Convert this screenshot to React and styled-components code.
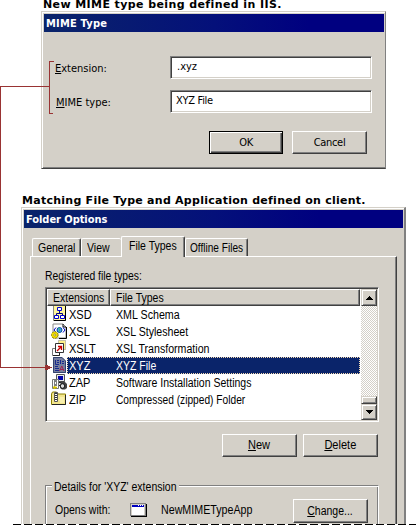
import React from "react";
import styled, { createGlobalStyle, css } from "styled-components";

const FACE = "#d4d0c8";
const SHADOW = "#808080";
const DARK = "#404040";
const NAVY = "#0a246a";
const RED = "#993333";

const Global = createGlobalStyle`
  * { box-sizing: border-box; }
  body { margin: 0; background: #fff; overflow: hidden; }
  u { text-decoration-thickness: 1px; text-underline-offset: 1px; text-decoration-skip-ink: none; }
`;

const tahoma = css`font-family: "DejaVu Sans Condensed", "DejaVu Sans", sans-serif; font-stretch: condensed;`;

const Page = styled.main`
  position: relative;
  width: 416px;
  height: 525px;
  overflow: hidden;
  background: #fff;
  color: #000;
`;

const Text = styled.span`
  display: block;
  white-space: pre;
  height: 13px;
  font-size: 11px;
  line-height: 13px;
  letter-spacing: ${(p) => p.$ls || 0}px;
`;

/* Narrow, tall bitmap-style lettering of the older system font. */
const SysText = styled(Text)`
  font-family: "Liberation Sans", Arial, sans-serif;
  font-size: 12px;
  line-height: 15px;
  transform: scaleX(${(p) => p.$sx || 0.875});
  transform-origin: ${(p) => (p.$center ? "center" : "left")};
`;

const Caption = styled.h2`
  margin: 0 0 0 ${(p) => p.$left}px;
  height: ${(p) => p.$height}px;
  padding-top: ${(p) => p.$top || 0}px;
  font: bold 11px/${(p) => p.$line || 13}px "DejaVu Sans", Verdana, sans-serif;
  letter-spacing: ${(p) => p.$ls}px;
  white-space: nowrap;
`;

const MimeWindow = styled.section`
  ${tahoma}
  width: 345px;
  height: 158px;
  margin-left: 41px;
  padding: 1px 0 0 1px;
  background: ${FACE};
  border: 1px solid;
  border-color: ${FACE} ${SHADOW} ${DARK} ${FACE};
  box-shadow: inset 1px 1px 0 #fff, inset 0 -1px 0 ${SHADOW};
`;

const FolderWindow = styled.section`
  width: 385px;
  height: 317px;
  margin-left: 21px;
  padding: 1px 0 0 1px;
  overflow: hidden;
  background: ${FACE};
  border: solid;
  border-width: 1px 2px 0 1px;
  border-color: ${FACE} ${SHADOW} ${FACE} ${FACE};
  box-shadow: inset 1px 1px 0 #fff;
`;

const TitleBar = styled.header`
  ${tahoma}
  width: ${(p) => p.$width}px;
  height: 18px;
  margin: 1px 0 0 1px;
  padding: 3px 0 0 2px;
  color: #fff;
  font-weight: bold;
  background: linear-gradient(90deg, #0a246a 0%, #04107a 50%, #000080 78%);
`;

const Form = styled.div`
  display: grid;
  grid-template-columns: 115px 202px;
  row-gap: 11px;
  padding: 24px 0 0 12px;
`;

const FieldLabel = styled.label`
  padding: 6px 0 0 ${(p) => p.$left || 0}px;
`;

const Field = styled.div`
  height: 23px;
  padding: 3px 0 0 ${(p) => p.$pad}px;
  background: #fff;
  border: 1px solid;
  border-color: ${SHADOW} #fff #fff ${SHADOW};
  box-shadow: inset 1px 1px 0 ${DARK}, inset -1px -1px 0 ${FACE};
`;

const ButtonRow = styled.div`
  display: flex;
  gap: ${(p) => p.$gap}px;
  margin: ${(p) => p.$top}px 0 0 ${(p) => p.$left}px;
`;

const Button = styled.button`
  display: flex;
  justify-content: center;
  align-items: flex-start;
  width: ${(p) => p.$width || 75}px;
  height: ${(p) => p.$height || 23}px;
  margin: 0;
  padding: ${(p) => p.$top ?? 4}px 0 0;
  font: inherit;
  color: #000;
  background: ${FACE};
  border: 1px solid;
  border-color: #fff ${DARK} ${DARK} #fff;
  box-shadow: inset -1px -1px 0 ${SHADOW};
  ${(p) => p.$default && css`
    border-color: #000;
    box-shadow: inset 1px 1px 0 #fff, inset -1px -1px 0 ${DARK}, inset -2px -2px 0 ${SHADOW};
  `}
`;

const Tabs = styled.nav`
  display: flex;
  align-items: flex-end;
  height: 28px;
  margin-left: 9px;
`;

const Tab = styled.div`
  position: relative;
  z-index: ${(p) => (p.$active ? 1 : 0)};
  width: ${(p) => p.$width}px;
  height: ${(p) => (p.$active ? 21 : 18)}px;
  margin-bottom: ${(p) => (p.$active ? -1 : 0)}px;
  padding: 2px 0 0 ${(p) => p.$pad}px;
  background: ${FACE};
  border: solid;
  border-width: 1px ${(p) => (p.$flat ? 0 : 1)}px 0 1px;
  border-color: #fff ${DARK} ${FACE} #fff;
  border-radius: 2px 2px 0 0;
  box-shadow: ${(p) => (p.$flat ? "none" : `inset -1px 0 0 ${SHADOW}`)};
`;

const TabPage = styled.div`
  width: 367px;
  height: 280px;
  margin-left: 7px;
  padding: 12px 0 0 14px;
  border: solid;
  border-width: 1px 1px 0 1px;
  border-color: #fff ${DARK} #fff #fff;
  box-shadow: inset -1px 0 0 ${SHADOW};
`;

const ListBox = styled.div`
  display: flex;
  width: 334px;
  height: 135px;
  margin-top: 5px;
  padding: 1px;
  background: #fff;
  border: 1px solid;
  border-color: ${SHADOW} #fff #fff ${SHADOW};
  box-shadow: inset 1px 1px 0 ${DARK}, inset -1px -1px 0 ${FACE};
`;

const ListBody = styled.div`
  width: 314px;
`;

const HeadRow = styled.div`
  display: flex;
  height: 17px;
`;

const HeadCell = styled.div`
  width: ${(p) => p.$width}px;
  padding: 1px 0 0 ${(p) => p.$pad}px;
  background: ${FACE};
  border: 1px solid;
  border-color: #fff ${DARK} ${DARK} #fff;
  box-shadow: inset -1px -1px 0 ${SHADOW};
`;

const Row = styled.div`
  display: flex;
  height: 17px;
  padding-left: 4px;
`;

const RowIcon = styled.svg`
  display: block;
  flex: none;
  width: 16px;
  height: 17px;
`;

const RowText = styled.div`
  display: grid;
  grid-template-columns: 47px 1fr;
  flex: 1;
  margin-right: 1px;
  padding: 1px 0 0 1px;
  border: 1px dotted transparent;
  ${(p) => p.$selected && css`
    color: #fff;
    background: ${NAVY};
    border-color: #f5dbb0;
  `}
`;

const ScrollBar = styled.div`
  display: flex;
  flex-direction: column;
  width: 16px;
  height: 131px;
  background: repeating-conic-gradient(#fff 0 25%, ${FACE} 0 50%) 0 0 / 2px 2px;
`;

const ScrollPart = styled.div`
  display: flex;
  align-items: center;
  justify-content: center;
  height: ${(p) => p.$height}px;
  margin-top: ${(p) => p.$top || 0}px;
  background: ${FACE};
  border: 1px solid;
  border-color: ${FACE} ${DARK} ${DARK} ${FACE};
  box-shadow: inset 1px 1px 0 #fff, inset -1px -1px 0 ${SHADOW};
`;

const Details = styled.fieldset`
  width: 334px;
  height: 60px;
  min-width: 0;
  margin: 21px 0 0;
  padding: 0;
  border: 1px solid ${SHADOW};
  border-right-color: #fff;
  box-shadow: inset 1px 1px 0 #fff, inset -1px 0 0 ${SHADOW};
`;

const Legend = styled.legend`
  height: 15px;
  width: 127px;
  margin-left: 6px;
  padding: 2px 0 0 2px;
  background: ${FACE};
`;

const DetailRow = styled.div`
  display: grid;
  grid-template-columns: 75px 31px 132px 75px;
  padding: 6px 0 0 9px;
`;

const DetailCell = styled.div`
  padding-top: 4px;
`;

const CutLine = styled.div`
  height: 1px;
  margin-left: 13px;
  background: repeating-linear-gradient(90deg, #000 0 8px, #fff 8px 11px);
`;

const Overlay = styled.svg`
  position: absolute;
  left: 0;
  top: 0;
  z-index: 3;
  pointer-events: none;
`;

const glyphs = {
  XSD: (
    <>
      <rect x="2" y="0" width="13" height="15" fill="#fff59a" />
      <path d="M2.5 0v14.5h12V0" fill="none" stroke="#888" />
      <path d="M14.5 0v14.5H3" fill="none" stroke="#000" />
      <path d="M8.5 5v2M5.5 9V7.500h6V9" fill="none" stroke="#000080" />
      <path d="M6.500 1.500h4v3h-4zM3.500 9.500h4v3h-4zM9.500 9.500h4v3h-4z" fill="#fff" stroke="#0000d0" />
    </>
  ),
  XSL: (
    <>
      <path d="M2 1h10l3 3v11H2z" fill="#fff" stroke="#888" />
      <path d="M12 1v3h3M15.500 4v11.500H8" fill="none" stroke="#000" />
      <path d="M5 4.500L3 7l2 2.500M12 4.500l2 2.500-2 2.500" fill="none" stroke="#0000c0" />
      <circle cx="8.500" cy="7" r="2.500" fill="#4aa3e8" stroke="#064b9b" />
      <path d="M7 5l2 1-1 3" stroke="#39b878" fill="none" />
      <circle cx="3.800" cy="12" r="3.300" fill="#f4df00" stroke="#8a7c00" strokeDasharray="2 1" />
      <circle cx="3.800" cy="12" r="1" fill="#fff" stroke="#796c00" strokeWidth=".6" />
    </>
  ),
  XSLT: (
    <>
      <path d="M7.500 .5h7v9h-7z" fill="#fff28a" stroke="#888" strokeDasharray="1 1" />
      <path d="M1.500 8.500h7v7h-7z" fill="#fff" stroke="#777" />
      <path d="M8.500 9v6.500H2" fill="none" stroke="#222" />
      <path d="M4.500 3.500h8v9h-8z" fill="#fff" stroke="#333" />
      <path d="M6 11l4-4M7 6.500h3.500V10" fill="none" stroke="#c00" strokeWidth="1.300" />
    </>
  ),
  XYZ: (
    <>
      <path d="M2 0h9l4 4v12H2z" fill="#777f9e" />
      <path d="M2.500 .5h8.500l3.500 3.500v11.500h-12z" fill="none" stroke="#34436f" />
      <path d="M4.500 3v4.500H8M6 3.500h2M6 5.500h2M9.500 3v4M11 4.500h2M11 6.500h2M4 9.500h3M4 11.500h4M4 13.500h4" fill="none" stroke="#172a8e" />
      <path d="M8.500 14l2.300-5 2.200 5M9 12.500h3.500" fill="none" stroke="#a02450" />
    </>
  ),
  ZAP: (
    <>
      <path d="M5.500 .5h8v7h-8z" fill="#e8e8e8" stroke="#555" />
      <path d="M7 2h5v4H7z" fill="#0000a8" />
      <path d="M4 8.500h9.500v3H4z" fill="#ddd" stroke="#222" />
      <path d="M1.500 5.500h6v9h-6z" fill="#fff" stroke="#777" />
      <path d="M3 7h3M3 9h1M5 9h1M3 11h3" fill="none" stroke="#000" />
      <path d="M3.500 12v3M2 13.500h4" stroke="#d4c000" strokeWidth="1.500" />
      <path d="M10 7h3l3 3v4l-2 1.500h-3L9 14z" fill="#444" />
      <circle cx="11.500" cy="12" r="2.300" fill="#ddd" stroke="#111" />
    </>
  ),
  ZIP: (
    <>
      <path d="M.5 13.500V3l1-2h4l1.500 2h7.500v10.500z" fill="#f2e58b" stroke="#8b8000" />
      <path d="M1 13.500h13.500V4" fill="none" stroke="#222" />
      <path d="M3.500 1.500h3v9h-3z" fill="#fff" stroke="#555" />
      <path d="M5 2v8" stroke="#000" strokeWidth="1.600" strokeDasharray="1 1" />
      <path d="M9 7h4M8 9h5M9 11h4" stroke="#fffbd0" />
    </>
  ),
};

const fileTypes = [
  { ext: "XSD", name: "XML Schema", sx: 0.89 },
  { ext: "XSL", name: "XSL Stylesheet", sx: 0.885 },
  { ext: "XSLT", name: "XSL Transformation", sx: 0.885 },
  { ext: "XYZ", name: "XYZ File", selected: true },
  { ext: "ZAP", name: "Software Installation Settings" },
  { ext: "ZIP", name: "Compressed (zipped) Folder", sx: 0.85 },
];

const Arrow = ({ down }) => (
  <svg width="7" height="4" shapeRendering="crispEdges">
    <path d={down ? "M0 0h7v1H0zM1 1h5v1H1zM2 2h3v1H2zM3 3h1v1H3z" : "M3 0h1v1H3zM2 1h3v1H2zM1 2h5v1H1zM0 3h7v1H0z"} />
  </svg>
);

const AppIcon = () => (
  <svg width="17" height="14" shapeRendering="crispEdges">
    <path d="M1 1h16v13H1z" fill="#000" />
    <path d="M0 0h16v13H0z" fill="#808080" />
    <path d="M1 1h14v11H1z" fill="#d4d0c8" />
    <path d="M2 2h12v2H2z" fill="#0000c0" />
    <path d="M8 2h1v1H8zM10 2h1v1h-1zM12 2h1v1h-1z" fill="#fff" />
    <path d="M2 4h12v8H2z" fill="#fff" />
  </svg>
);

export default function App() {
  return (
    <Page>
      <Global />
      <Caption $left={43} $height={11} $line={9} $ls={0.4}>
        New MIME type being defined in IIS.
      </Caption>
      <MimeWindow>
        <TitleBar $width={340}><Text $ls={0.2}>MIME Type</Text></TitleBar>
        <Form>
          <FieldLabel><Text><u>E</u>xtension:</Text></FieldLabel>
          <Field $pad={6}><Text>.xyz</Text></Field>
          <FieldLabel $left={1}><Text><u>M</u>IME type:</Text></FieldLabel>
          <Field $pad={5}><Text $ls={-0.3}>XYZ File</Text></Field>
        </Form>
        <ButtonRow $gap={9} $top={18} $left={166}>
          <Button $default $width={74}><Text $ls={-0.3}>OK</Text></Button>
          <Button><Text $ls={-0.3}>Cancel</Text></Button>
        </ButtonRow>
      </MimeWindow>

      <Caption $left={22} $height={38} $top={25} $ls={0.26}>
        Matching File Type and Application defined on client.
      </Caption>
      <FolderWindow>
        <TitleBar $width={379}><Text $ls={-0.05}>Folder Options</Text></TitleBar>
        <Tabs>
          <Tab $width={49} $pad={5}><SysText>General</SysText></Tab>
          <Tab $width={40} $pad={5} $flat><SysText>View</SysText></Tab>
          <Tab $width={64} $pad={7} $active><SysText>File Types</SysText></Tab>
          <Tab $width={63} $pad={4}><SysText $sx={0.84}>Offline Files</SysText></Tab>
        </Tabs>
        <TabPage>
          <SysText $sx={0.865}>Registered file <u>t</u>ypes:</SysText>
          <ListBox>
            <ListBody>
              <HeadRow>
                <HeadCell $width={63} $pad={5}><SysText>Extensions</SysText></HeadCell>
                <HeadCell $width={250} $pad={5}><SysText>File Types</SysText></HeadCell>
              </HeadRow>
              {fileTypes.map((t) => (
                <Row key={t.ext}>
                  <RowIcon viewBox="0 0 16 17">{glyphs[t.ext]}</RowIcon>
                  <RowText $selected={t.selected}>
                    <SysText $sx={0.92}>{t.ext}</SysText>
                    <SysText $sx={t.sx}>{t.name}</SysText>
                  </RowText>
                </Row>
              ))}
            </ListBody>
            <ScrollBar>
              <ScrollPart $height={17}><Arrow /></ScrollPart>
              <ScrollPart $height={8} $top={90} />
              <ScrollPart $height={16}><Arrow down /></ScrollPart>
            </ScrollBar>
          </ListBox>
          <ButtonRow $gap={6} $top={12} $left={177}>
            <Button $top={3}><SysText $center $sx={0.92}><u>N</u>ew</SysText></Button>
            <Button $top={3}><SysText $center $sx={0.92}><u>D</u>elete</SysText></Button>
          </ButtonRow>
          <Details>
            <Legend><SysText>Details for 'XYZ' extension</SysText></Legend>
            <DetailRow>
              <DetailCell><SysText>Opens with:</SysText></DetailCell>
              <DetailCell><AppIcon /></DetailCell>
              <DetailCell><SysText $sx={0.89}>NewMIMETypeApp</SysText></DetailCell>
              <Button $height={24}><SysText $center>{<u>C</u>}hange...</SysText></Button>
            </DetailRow>
          </Details>
        </TabPage>
      </FolderWindow>
      <CutLine />

      <Overlay width="416" height="525" shapeRendering="crispEdges">
        <path d="M54 61.500H49.500V113.500H53M49.500 86.500H.5V367.500H46" fill="none" stroke={RED} />
        <path d="M45 365h3v1h2v1h2v1h-2v1h-2v1h-3z" fill={RED} />
      </Overlay>
    </Page>
  );
}
